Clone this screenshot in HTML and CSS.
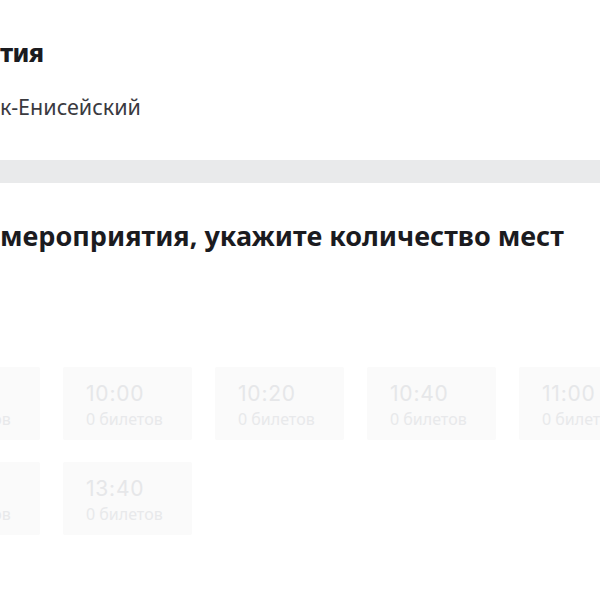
FILE: index.html
```html
<!DOCTYPE html>
<html lang="ru">
<head>
<meta charset="utf-8">
<link rel="stylesheet" href="styles.css">
</head>
<body>
<div class="page">
  <header class="event-head">
    <h1 class="event-title">тия</h1>
    <div class="event-place">к-Енисейский</div>
  </header>
  <div class="band"></div>
  <section class="sessions">
    <h2 class="sessions-title">мероприятия, укажите количество мест</h2>
    <div class="slots">
      <div class="slot-row">
        <div class="slot"><div class="slot-time">09:40</div><div class="slot-count">0 билетов</div></div>
        <div class="slot"><div class="slot-time">10:00</div><div class="slot-count">0 билетов</div></div>
        <div class="slot"><div class="slot-time">10:20</div><div class="slot-count">0 билетов</div></div>
        <div class="slot"><div class="slot-time">10:40</div><div class="slot-count">0 билетов</div></div>
        <div class="slot"><div class="slot-time">11:00</div><div class="slot-count">0 билетов</div></div>
      </div>
      <div class="slot-row">
        <div class="slot"><div class="slot-time">13:20</div><div class="slot-count">0 билетов</div></div>
        <div class="slot"><div class="slot-time">13:40</div><div class="slot-count">0 билетов</div></div>
      </div>
    </div>
  </section>
</div>
</body>
</html>
```
FILE: styles.css
```css
html, body {
  margin: 0;
  padding: 0;
  background: #ffffff;
}
body {
  font-family: "Noto Sans", "Open Sans", sans-serif;
  color: #1b1b1f;
  overflow: hidden;
}
.page {
  width: 600px;
}
.event-head {
  padding-top: 36px;
}
.event-title {
  margin: 0;
  font-size: 25px;
  line-height: 32px;
  font-weight: 800;
  letter-spacing: -0.6px;
  color: #1b1b1f;
}
.event-place {
  margin-top: 25px;
  font-size: 21.5px;
  line-height: 28px;
  color: #3a3a3f;
}
.band {
  margin-top: 39px;
  height: 23px;
  background: #e9eaeb;
}
.sessions {
  padding-top: 36px;
}
.sessions-title {
  margin: 0;
  font-size: 27px;
  line-height: 34px;
  font-weight: 700;
  color: #1b1b1f;
  white-space: nowrap;
}
.slots {
  margin-top: 114px;
  margin-left: -89px;
  display: flex;
  flex-direction: column;
  gap: 22px;
}
.slot-row {
  display: flex;
  gap: 23px;
}
.slot {
  flex: 0 0 129px;
  height: 73px;
  box-sizing: border-box;
  padding: 15px 23px 0;
  background: #fafafa;
  border-radius: 2px;
}
.slot-time {
  font-family: "Inter", "Roboto", sans-serif;
  font-size: 21px;
  line-height: 24px;
  color: #e6e7e9;
  letter-spacing: 0.8px;
}
.slot-count {
  margin-top: 3px;
  font-size: 16px;
  line-height: 20px;
  color: #e8e9eb;
}
```
